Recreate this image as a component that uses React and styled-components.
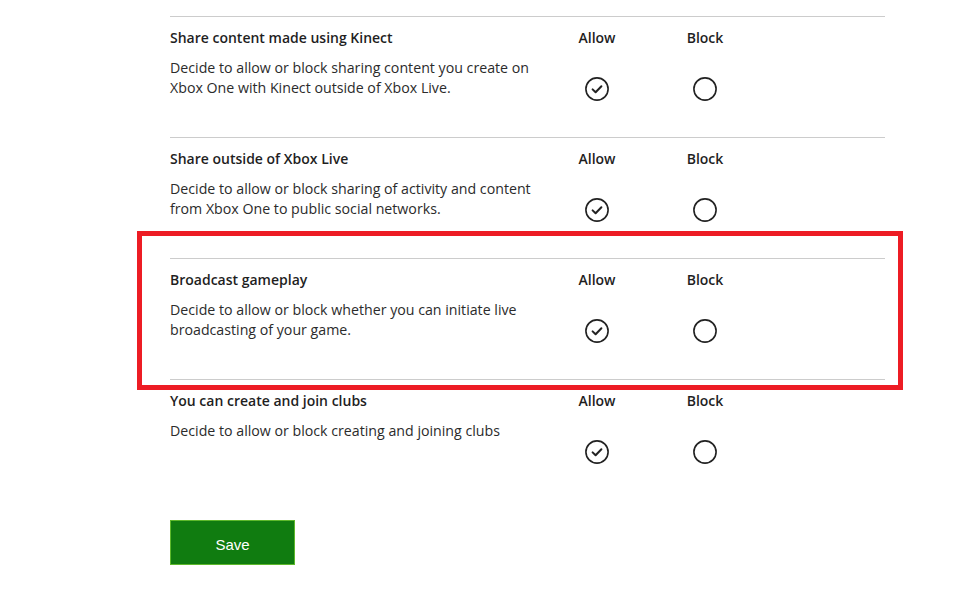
import React from 'react'
import styled, { createGlobalStyle } from 'styled-components'

const GlobalStyle = createGlobalStyle`
  html, body {
    margin: 0;
    padding: 0;
    background: #ffffff;
  }
  body {
    font-family: 'Open Sans', 'Noto Sans', Arial, sans-serif;
    color: #1f1f1f;
  }
`

const Page = styled.div`
  width: 715px;
  padding: 16px 0 0 170px;
`

const Section = styled.section`
  position: relative;
  box-sizing: border-box;
  height: 121px;
  border-top: 1px solid #cccccc;
  display: grid;
  grid-template-columns: 373px 108px 108px 1fr;
  padding-top: 11px;
  align-items: start;
`

const TextCol = styled.div`
  display: flex;
  flex-direction: column;
  gap: 10px;
`

const Title = styled.h3`
  margin: 0;
  font-size: 14px;
  font-weight: 600;
  line-height: 20px;
  color: #1f1f1f;
`

const Desc = styled.p`
  margin: 0;
  font-size: 14.2px;
  font-weight: 400;
  line-height: 20px;
  color: #2b2b2b;
`

const OptionCol = styled.div`
  display: flex;
  flex-direction: column;
  align-items: center;
  gap: 29px;
`

const OptionLabel = styled.span`
  font-size: 14px;
  font-weight: 600;
  line-height: 20px;
  color: #1f1f1f;
`

const RadioButton = styled.button`
  width: 24px;
  height: 24px;
  padding: 0;
  border: none;
  background: none;
  display: block;
  cursor: pointer;
`

const Highlight = styled.div`
  position: absolute;
  top: -28px;
  left: -33px;
  right: -18px;
  bottom: -11px;
  border: 5px solid #ed1c24;
  pointer-events: none;
`

const SaveButton = styled.button`
  margin-top: 20px;
  width: 125px;
  height: 45px;
  padding: 3px 0 0;
  background: #107c10;
  border: 1px solid #5db82b;
  color: #ffffff;
  font-family: 'Liberation Sans', Arial, sans-serif;
  font-size: 15px;
  cursor: pointer;
`

const Radio = ({ checked }) => (
  <RadioButton aria-pressed={checked}>
    <svg width="24" height="24" viewBox="0 0 24 24" fill="none">
      <circle cx="12" cy="12" r="11.1" stroke="#222" strokeWidth="1.6" />
      {checked && (
        <path
          d="M7.6 12.4 L10.6 15.3 L16.4 9.2"
          stroke="#222"
          strokeWidth="2"
          strokeLinecap="round"
          strokeLinejoin="round"
        />
      )}
    </svg>
  </RadioButton>
)

const settings = [
  {
    title: 'Share content made using Kinect',
    desc: ['Decide to allow or block sharing content you create on', 'Xbox One with Kinect outside of Xbox Live.']
  },
  {
    title: 'Share outside of Xbox Live',
    desc: ['Decide to allow or block sharing of activity and content', 'from Xbox One to public social networks.']
  },
  {
    title: 'Broadcast gameplay',
    desc: ['Decide to allow or block whether you can initiate live', 'broadcasting of your game.'],
    highlighted: true
  },
  {
    title: 'You can create and join clubs',
    desc: ['Decide to allow or block creating and joining clubs']
  }
]

const SettingRow = ({ title, desc, highlighted }) => (
  <Section>
    <TextCol>
      <Title>{title}</Title>
      <Desc>
        {desc.map((line, i) => (
          <React.Fragment key={i}>
            {line}
            {i < desc.length - 1 && <br />}
          </React.Fragment>
        ))}
      </Desc>
    </TextCol>
    <OptionCol>
      <OptionLabel>Allow</OptionLabel>
      <Radio checked />
    </OptionCol>
    <OptionCol>
      <OptionLabel>Block</OptionLabel>
      <Radio />
    </OptionCol>
    {highlighted && <Highlight />}
  </Section>
)

export default function App() {
  return (
    <>
      <GlobalStyle />
      <Page>
        {settings.map((s) => (
          <SettingRow key={s.title} {...s} />
        ))}
        <SaveButton>Save</SaveButton>
      </Page>
    </>
  )
}
